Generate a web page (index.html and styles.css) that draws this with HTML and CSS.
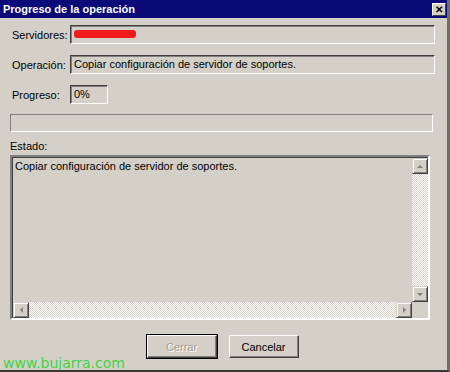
FILE: index.html
```html
<!DOCTYPE html>
<html lang="es">

<head>
    <meta charset="UTF-8">
    <title>Progreso de la operación</title>
    <link rel="stylesheet" href="styles.css">
</head>

<body>

    <div class="window">
        <div class="titlebar">
            <span class="title">Progreso de la operación</span>
            <span class="close">&#x2715;</span>
        </div>

        <div class="content">
            <div class="row">
                <label>Servidores:</label>
                <div class="field wide"><span class="redacted"></span></div>
            </div>

            <div class="row">
                <label>Operación:</label>
                <div class="field wide">Copiar configuración de servidor de soportes.</div>
            </div>

            <div class="row">
                <label>Progreso:</label>
                <div class="field small">0%</div>
            </div>

            <div class="progress"></div>

            <div class="estado">Estado:</div>

            <div class="log">
                <div class="log-main">
                    <div class="log-text">Copiar configuración de servidor de soportes.</div>
                    <div class="vscroll">
                        <div class="sbtn"><span class="arrow up"></span></div>
                        <div class="track"></div>
                        <div class="sbtn"><span class="arrow down"></span></div>
                    </div>
                </div>
                <div class="hscroll">
                    <div class="sbtn"><span class="arrow left"></span></div>
                    <div class="track"></div>
                    <div class="sbtn"><span class="arrow right"></span></div>
                    <div class="corner"></div>
                </div>
            </div>

            <div class="buttons">
                <button class="btn default" disabled>Cerrar</button>
                <button class="btn">Cancelar</button>
            </div>
        </div>

        <div class="watermark">www.bujarra.com</div>
    </div>

</body>

</html>
```

FILE: styles.css
```css
body {
    margin: 0;
    background: #d4d0c8;
    font-family: 'Liberation Sans', Arial, sans-serif;
    font-size: 11px;
    color: #000;
}

.window {
    position: relative;
    width: 450px;
    height: 372px;
    box-sizing: border-box;
    background: #d4d0c8;
    border-right: 3px solid #6f6d68;
    border-bottom: 2px solid #3a3936;
    overflow: hidden;
}

.titlebar {
    height: 18px;
    background: #0a0a78;
    display: flex;
    align-items: center;
    justify-content: space-between;
    padding: 0 1px 0 3px;
}

.title {
    color: #fff;
    font-family: 'Liberation Sans', Arial, sans-serif;
    font-weight: bold;
    font-size: 11px;
}

.close {
    width: 14px;
    height: 13px;
    box-sizing: border-box;
    background: #d4d0c8;
    border: 1px solid;
    border-color: #fff #404040 #404040 #fff;
    font-size: 10px;
    font-weight: bold;
    line-height: 11px;
    text-align: center;
    color: #000;
}

.content {
    padding: 7px 12px 0 10px;
    display: flex;
    flex-direction: column;
}

.row {
    display: flex;
    align-items: center;
    height: 19px;
    margin-bottom: 11px;
}

.row label {
    width: 58px;
    padding-left: 2px;
}

.field {
    height: 19px;
    box-sizing: border-box;
    border: 1px solid;
    border-color: #404040 #fff #fff #404040;
    box-shadow: inset 1px 1px 0 #808080;
    padding: 2px 3px;
    white-space: nowrap;
}

.wide {
    flex: 1;
}

.small {
    width: 38px;
}

.redacted {
    display: inline-block;
    width: 62px;
    height: 8px;
    margin-top: 2px;
    background: #ee1c1c;
    border-radius: 3px;
}

.progress {
    height: 18px;
    margin-top: -1px;
    margin-right: 2px;
    box-sizing: border-box;
    border: 1px solid;
    border-color: #808080 #fff #fff #808080;
}

.estado {
    margin-top: 8px;
    height: 14px;
}

.log {
    margin-top: 1px;
    margin-right: 5px;
    height: 165px;
    box-sizing: border-box;
    border: 2px solid;
    border-color: #808080 #fff #fff #808080;
    box-shadow: inset 1px 1px 0 #404040;
    display: flex;
    flex-direction: column;
    padding: 1px 0 0 1px;
}

.log-main {
    flex: 1;
    display: flex;
}

.log-text {
    flex: 1;
    padding: 2px 2px;
}

.vscroll {
    width: 16px;
    display: flex;
    flex-direction: column;
}

.hscroll {
    height: 16px;
    display: flex;
}

.track {
    flex: 1;
    background-color: #fff;
    background-image: repeating-conic-gradient(#d4d0c8 0 25%, #fff 0 50%);
    background-size: 2px 2px;
}

.sbtn {
    width: 16px;
    height: 16px;
    box-sizing: border-box;
    background: #d4d0c8;
    border: 1px solid;
    border-color: #d4d0c8 #404040 #404040 #d4d0c8;
    box-shadow: inset 1px 1px 0 #fff, inset -1px -1px 0 #808080;
    display: flex;
    align-items: center;
    justify-content: center;
}

.arrow {
    width: 0;
    height: 0;
    border: 3px solid transparent;
}

.arrow.up {
    border-bottom-color: #808080;
    margin-top: -3px;
}

.arrow.down {
    border-top-color: #808080;
    margin-bottom: -3px;
}

.arrow.left {
    border-right-color: #808080;
    margin-left: -3px;
}

.arrow.right {
    border-left-color: #808080;
    margin-right: -3px;
}

.corner {
    width: 16px;
    height: 16px;
    background: #d4d0c8;
}

.buttons {
    display: flex;
    justify-content: center;
    gap: 12px;
    margin-top: 15px;
}

.btn {
    width: 70px;
    height: 23px;
    box-sizing: border-box;
    background: #d4d0c8;
    border: 1px solid;
    border-color: #fff #404040 #404040 #fff;
    box-shadow: inset -1px -1px 0 #808080;
    font-family: 'Liberation Sans', Arial, sans-serif;
    font-size: 11px;
    color: #000;
    padding: 0;
}

.btn.default {
    outline: 1px solid #000;
    outline-offset: 0;
    color: #a09e98;
    text-shadow: 1px 1px 0 #fff;
}

.watermark {
    position: absolute;
    left: 3px;
    bottom: -1px;
    color: #3fd43f;
    font-family: 'DejaVu Sans', sans-serif;
    font-size: 14px;
}
```
